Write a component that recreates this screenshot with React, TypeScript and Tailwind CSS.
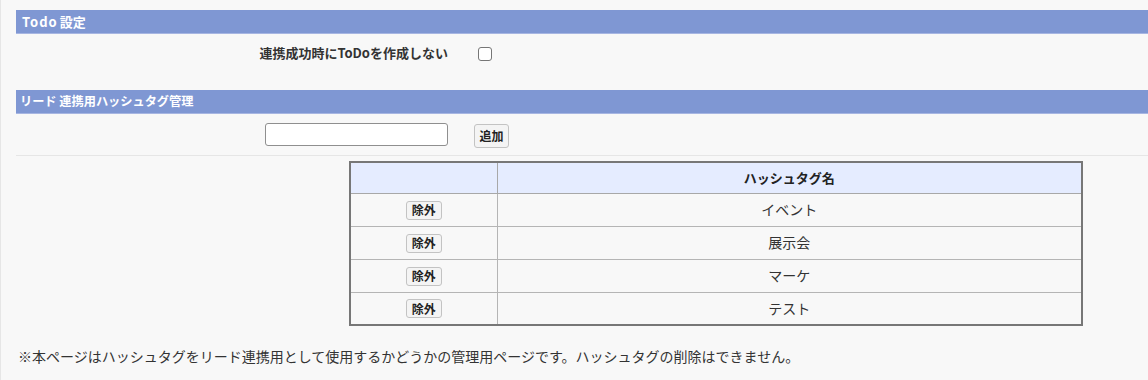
import React from "react";

const tags = ["イベント", "展示会", "マーケ", "テスト"];

export default function App() {
  return (
    <div
      className="w-[1148px] h-[380px] bg-[#f8f8f8] text-[#333] overflow-hidden"
      style={{ fontFamily: '"Noto Sans CJK JP", "Noto Sans", sans-serif' }}
    >
      <div className="border-l border-[#e6e6e6] h-full pl-[15px] pt-[10px]">
        <div className="h-[24px] bg-[#7f97d3] border-b border-[#a7b6e2] flex items-center pl-[6px] text-white text-[13px] font-bold leading-none">
          <span className="tracking-[1px]">Todo</span>
          <span className="ml-[2px]">設定</span>
        </div>
        <div className="h-[56px] flex items-start pt-[10px]">
          <div className="w-[432px] text-right text-[13px] font-bold leading-[18px]">
            連携成功時にToDoを作成しない
          </div>
          <div className="ml-[30px] mt-[3px] w-[14px] h-[14px] border border-[#767676] rounded-[3px] bg-white" />
        </div>
        <div className="h-[24px] bg-[#7f97d3] border-b border-[#a7b6e2] flex items-center pl-[4px] text-white text-[12.2px] font-bold leading-none">
          リード 連携用ハッシュタグ管理
        </div>
        <div className="h-[42px] border-b border-[#e6e6e6] flex items-center">
          <input
            type="text"
            className="ml-[249px] w-[183px] h-[23px] bg-white border border-[#8f8f8f] rounded-[3px]"
          />
          <button className="ml-[26px] mt-[3px] w-[35px] h-[24px] border border-[#c3c3c3] rounded-[3px] bg-[#f4f4f4] text-[12px] font-bold text-[#222] leading-none">
            追加
          </button>
        </div>
        <div className="pt-[5px] pl-[333px]">
          <table className="w-[734px] border-collapse border-2 border-[#777] text-[14px]">
            <thead>
              <tr className="h-[31px] bg-[#e5ecff]">
                <th className="w-[147px] border border-[#a8a8a8]"></th>
                <th className="border border-[#a8a8a8] text-[13px] font-bold text-[#222]">ハッシュタグ名</th>
              </tr>
            </thead>
            <tbody>
              {tags.map((t) => (
                <tr key={t} className="h-[33px]">
                  <td className="border border-[#b5b5b5] text-center">
                    <button className="w-[36px] h-[19px] border border-[#c3c3c3] rounded-[3px] bg-[#f4f4f4] text-[12px] font-bold text-[#222] leading-none">
                      除外
                    </button>
                  </td>
                  <td className="border border-[#b5b5b5] text-center text-[#333]">{t}</td>
                </tr>
              ))}
            </tbody>
          </table>
        </div>
        <div className="pt-[20px] pl-[2px] text-[14px] leading-[20px]">
          ※本ページはハッシュタグをリード連携用として使用するかどうかの管理用ページです。ハッシュタグの削除はできません。
        </div>
      </div>
    </div>
  );
}
